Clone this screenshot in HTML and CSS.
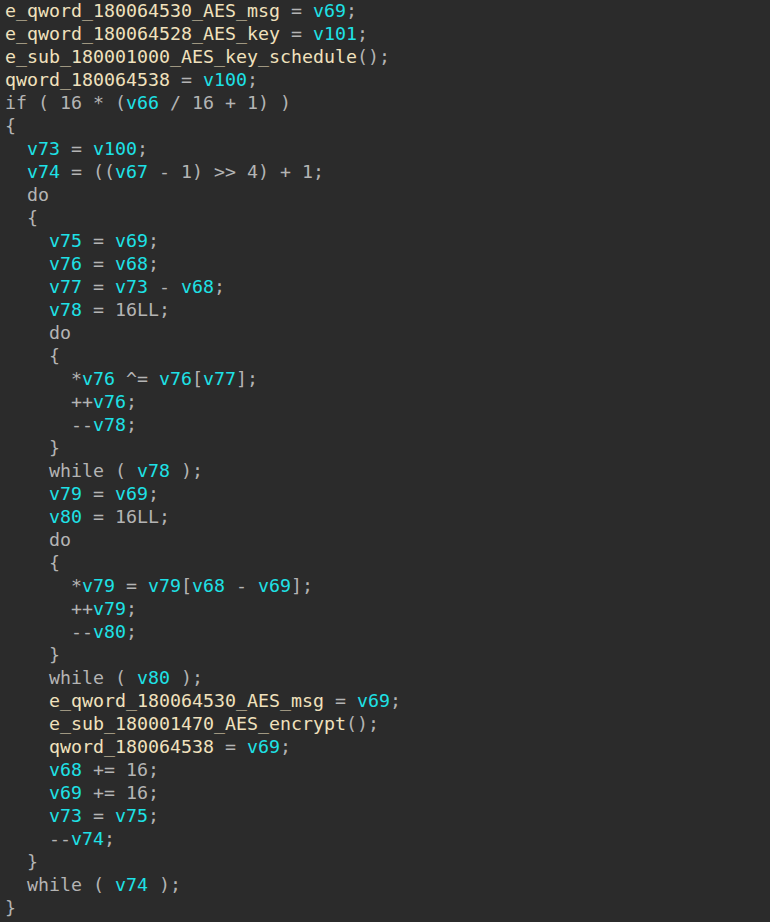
FILE: index.html
```html
<!DOCTYPE html>
<html>
<head>
<meta charset="utf-8">
<link rel="stylesheet" href="styles.css">
</head>
<body>
<pre class="code"><span class="n">e_qword_180064530_AES_msg</span> = <span class="v">v69</span>;
<span class="n">e_qword_180064528_AES_key</span> = <span class="v">v101</span>;
<span class="n">e_sub_180001000_AES_key_schedule</span>();
<span class="n">qword_180064538</span> = <span class="v">v100</span>;
if ( 16 * (<span class="v">v66</span> / 16 + 1) )
{
  <span class="v">v73</span> = <span class="v">v100</span>;
  <span class="v">v74</span> = ((<span class="v">v67</span> - 1) &gt;&gt; 4) + 1;
  do
  {
    <span class="v">v75</span> = <span class="v">v69</span>;
    <span class="v">v76</span> = <span class="v">v68</span>;
    <span class="v">v77</span> = <span class="v">v73</span> - <span class="v">v68</span>;
    <span class="v">v78</span> = 16LL;
    do
    {
      *<span class="v">v76</span> ^= <span class="v">v76</span>[<span class="v">v77</span>];
      ++<span class="v">v76</span>;
      --<span class="v">v78</span>;
    }
    while ( <span class="v">v78</span> );
    <span class="v">v79</span> = <span class="v">v69</span>;
    <span class="v">v80</span> = 16LL;
    do
    {
      *<span class="v">v79</span> = <span class="v">v79</span>[<span class="v">v68</span> - <span class="v">v69</span>];
      ++<span class="v">v79</span>;
      --<span class="v">v80</span>;
    }
    while ( <span class="v">v80</span> );
    <span class="n">e_qword_180064530_AES_msg</span> = <span class="v">v69</span>;
    <span class="n">e_sub_180001470_AES_encrypt</span>();
    <span class="n">qword_180064538</span> = <span class="v">v69</span>;
    <span class="v">v68</span> += 16;
    <span class="v">v69</span> += 16;
    <span class="v">v73</span> = <span class="v">v75</span>;
    --<span class="v">v74</span>;
  }
  while ( <span class="v">v74</span> );
}</pre>
</body>
</html>
```
FILE: styles.css
```css
html, body {
  margin: 0;
  padding: 0;
  background: #2b2b2b;
  height: 100%;
}
.code {
  margin: -1px 0 0 0;
  padding: 0 0 0 5px;
  font-family: "DejaVu Sans Mono", monospace;
  font-size: 18.27px;
  line-height: 23px;
  color: #b4b4b4;
  white-space: pre;
}
.n {
  color: #f0e1bd;
}
.v {
  color: #1ee1e6;
}
```
